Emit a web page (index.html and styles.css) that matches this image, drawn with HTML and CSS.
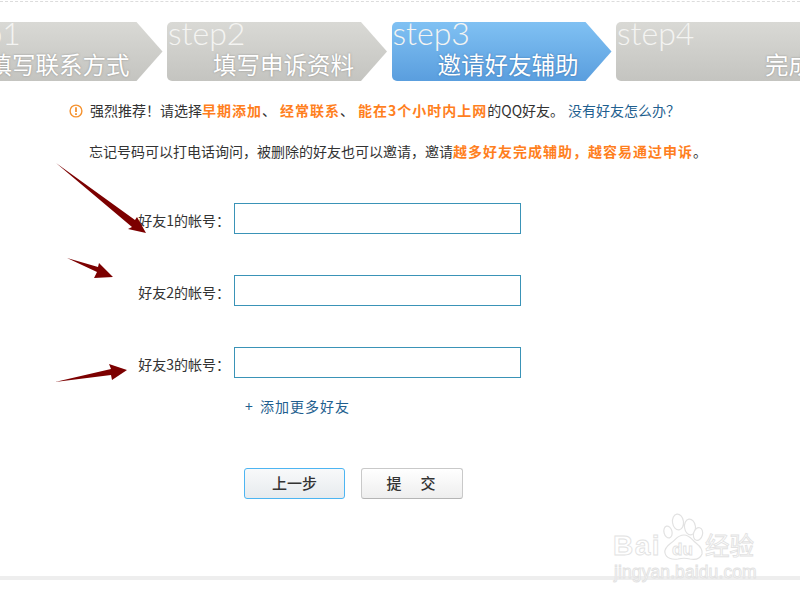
FILE: index.html
```html
<!DOCTYPE html>
<html lang="zh-CN">
<head>
<meta charset="utf-8">
<title>邀请好友辅助</title>
<link rel="stylesheet" href="styles.css">
</head>
<body>
<div class="page">
  <div class="steps">
    <div class="step step-first"><span class="step-no">step1</span><span class="step-label">填写联系方式</span></div>
    <div class="step"><span class="step-no">step2</span><span class="step-label">填写申诉资料</span></div>
    <div class="step step-active"><span class="step-no">step3</span><span class="step-label">邀请好友辅助</span></div>
    <div class="step step-last"><span class="step-no">step4</span><span class="step-label step-label-last">完成</span></div>
  </div>

  <p class="notice">
    <svg class="notice-icon" width="14" height="14" viewBox="0 0 14 14"><circle cx="7" cy="7" r="5.9" fill="none" stroke="#f5922f" stroke-width="1.4"/><path d="M7 3.3v4.7M7 9.3v1.6" stroke="#f5922f" stroke-width="1.8" fill="none"/></svg>
    <span class="notice-text">强烈推荐！请选择<b class="hot">早期添加</b><span class="sep">、</span><b class="hot">经常联系</b><span class="sep">、</span><b class="hot">能在3个小时内上网</b>的QQ好友。<a class="link link-help" href="#">没有好友怎么办？</a></span>
  </p>
  <p class="hint">忘记号码可以打电话询问，被删除的好友也可以邀请，邀请<b class="hot">越多好友完成辅助，越容易通过申诉</b>。</p>

  <form class="form">
    <div class="row"><label class="row-label">好友1的帐号：</label><input class="field" type="text"></div>
    <div class="row"><label class="row-label">好友2的帐号：</label><input class="field" type="text"></div>
    <div class="row"><label class="row-label">好友3的帐号：</label><input class="field" type="text"></div>
    <a class="link add-more" href="#"><span class="add-plus">+</span>添加更多好友</a>
    <div class="actions">
      <button class="btn btn-prev" type="button">上一步</button>
      <button class="btn btn-submit" type="button">提　交</button>
    </div>
  </form>
  <div class="foot-line"></div>

  <svg class="arrows" width="800" height="600" viewBox="0 0 800 600">
    <polygon fill="#7c0000" points="56,163 135,220 137,217 146,233 128,229 132,227"/>
    <polygon fill="#7c0000" points="67,258 98,267 99,263 113,277 94,278 97,272"/>
    <polygon fill="#7c0000" points="55,382 111,369 109,364 127,370 112,380 111,375"/>
  </svg>

  <svg class="watermark" width="800" height="600" viewBox="0 0 800 600">
    <g fill="#fff" stroke="#e2e2e2" stroke-width="1.2">
      <ellipse cx="678" cy="522" rx="5.5" ry="8" transform="rotate(-8 678 522)"/>
      <ellipse cx="690" cy="527" rx="5.5" ry="8" transform="rotate(-8 690 527)"/>
      <ellipse cx="698" cy="534" rx="4.5" ry="6.5" transform="rotate(15 698 534)"/>
      <ellipse cx="668" cy="532" rx="4" ry="6" transform="rotate(-15 668 532)"/>
      <path d="M684 535c6 0 8 5 12 8 5 4 7 7 6 11-2 5-7 6-12 5-4-1-8-1-12 0-6 1-12-1-13-6-1-4 2-7 6-10 5-3 6-8 13-8z"/>
    </g>
    <g fill="#fff" stroke="#e2e2e2" stroke-width="0.9">
      <text class="wm-big" x="613" y="555">Bai</text>
      <text class="wm-du" x="672" y="555">du</text>
      <text class="wm-cn" x="705" y="555">经验</text>
      <text class="wm-url" x="614" y="578">jingyan.baidu.com</text>
    </g>
  </svg>
</div>
</body>
</html>
```
FILE: styles.css
```css
* { box-sizing: border-box; }
html, body { margin: 0; padding: 0; background: #fff; }
body { font-family: "Noto Sans CJK SC", "Liberation Sans", sans-serif; font-size: 14px; color: #333; }
.page { position: relative; width: 800px; height: 600px; overflow: hidden; }
.page::before { content: ""; display: block; height: 0; border-top: 1px dashed #dcdcdc; margin-top: 1px; }

.steps { display: flex; gap: 4.5px; margin: 20px 0 0 -57.5px; width: 1200px; }
.step {
  flex: 0 0 220px; height: 59px; padding-left: 1px; border-radius: 5px 0 0 5px; overflow: hidden;
  background: linear-gradient(#d9d9d5, #c4c4c0);
  clip-path: polygon(0 0, 194px 0, 220px 50%, 194px 100%, 0 100%);
  display: flex; flex-direction: column; color: #fff;
}
.step-active { background: linear-gradient(#80c1f3, #5a9ede); }
.step-last { flex-basis: 300px; clip-path: none; }
.step-no { font-family: Lato, "Liberation Sans", sans-serif; font-weight: 300; font-size: 32px; line-height: 22px; height: 26px; color: #f4f4f2; }
.step-label { margin: 2px 0 0 45px; font-size: 23.5px; line-height: 28px; white-space: nowrap; text-shadow: 0 0 2px rgba(90,90,90,.55); }
.step-active .step-label { text-shadow: 0 0 2px rgba(20,70,130,.6); }
.step-label-last { margin-left: 148px; }

.notice { display: flex; align-items: center; margin: 20px 0 0 69px; height: 20px; line-height: 20px; white-space: pre; }
.notice-icon { flex: none; margin-right: 7px; }
.notice-text { position: relative; top: -1px; }
.hint { margin: 20px 0 0 89px; height: 20px; line-height: 20px; white-space: pre; }
.hot { color: #ff7f1e; font-weight: 700; letter-spacing: 1px; }
.sep { display: inline-block; width: 18px; }
.link { color: #1f5f8f; text-decoration: none; }
.link-help { margin-left: 4px; }

.form { display: flex; flex-direction: column; margin-top: 42px; }
.row { display: flex; align-items: center; height: 31px; margin-bottom: 41px; }
.row-label { width: 230px; text-align: right; padding-top: 3px; white-space: nowrap; }
.field { width: 287px; height: 31px; margin-left: 4px; border: 1px solid #3a93b7; background: #fff; padding: 0 6px; outline: none; }
.add-more { margin: -23px 0 0 245px; height: 20px; line-height: 20px; letter-spacing: 1px; }
.add-plus { display: inline-block; width: 15px; }
.actions { display: flex; gap: 16px; margin: 52px 0 0 244px; }
.btn { width: 101px; height: 31px; padding: 0 0 2px; border-radius: 3px; font-family: inherit; font-size: 15px; font-weight: 500; color: #333; cursor: pointer; }
.btn-prev { border: 1px solid #4db5f2; background: linear-gradient(#f8f9fa, #e7ebee); }
.btn-submit { width: 102px; border: 1px solid #c9c9c9; border-bottom-color: #b5b5b5; background: linear-gradient(#fff, #eeeeee); letter-spacing: 2px; }
.foot-line { height: 4px; margin-top: 77px; background: #eeeeee; }

.arrows, .watermark { position: absolute; left: 0; top: 0; pointer-events: none; }
.wm-big { font-family: "Liberation Sans", sans-serif; font-weight: 700; font-size: 28px; letter-spacing: 1.5px; }
.wm-du { font-family: "Liberation Sans", sans-serif; font-weight: 700; font-size: 17px; }
.wm-cn { font-family: "Noto Sans CJK SC", sans-serif; font-size: 24.5px; }
.wm-url { font-family: "Liberation Sans", sans-serif; font-size: 17.5px; letter-spacing: 0.1px; }
```
